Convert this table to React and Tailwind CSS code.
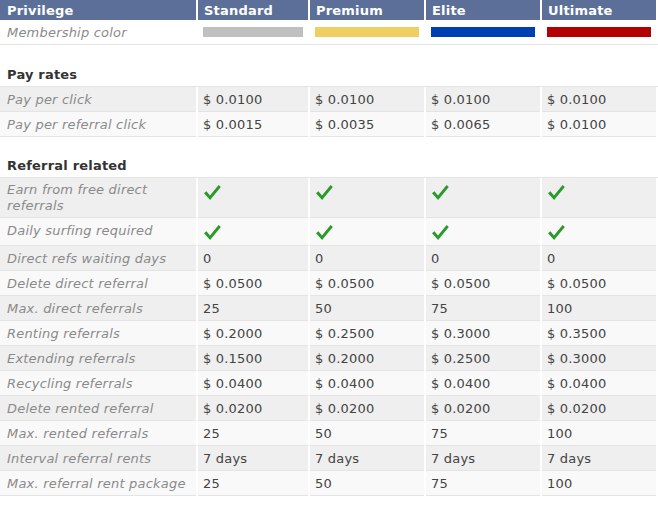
const cols = "grid grid-cols-[196px_110px_114px_114px_114px] gap-x-[2px]";

const levels = ["Standard", "Premium", "Elite", "Ultimate"];
const barColors = ["bg-[#c0c0c0]", "bg-[#efcf5f]", "bg-[#003eb3]", "bg-[#b30000]"];

const payRates = [
  ["Pay per click", ["$ 0.0100", "$ 0.0100", "$ 0.0100", "$ 0.0100"]],
  ["Pay per referral click", ["$ 0.0015", "$ 0.0035", "$ 0.0065", "$ 0.0100"]],
];

const referral = [
  ["Earn from free direct referrals", "check"],
  ["Daily surfing required", "check"],
  ["Direct refs waiting days", ["0", "0", "0", "0"]],
  ["Delete direct referral", ["$ 0.0500", "$ 0.0500", "$ 0.0500", "$ 0.0500"]],
  ["Max. direct referrals", ["25", "50", "75", "100"]],
  ["Renting referrals", ["$ 0.2000", "$ 0.2500", "$ 0.3000", "$ 0.3500"]],
  ["Extending referrals", ["$ 0.1500", "$ 0.2000", "$ 0.2500", "$ 0.3000"]],
  ["Recycling referrals", ["$ 0.0400", "$ 0.0400", "$ 0.0400", "$ 0.0400"]],
  ["Delete rented referral", ["$ 0.0200", "$ 0.0200", "$ 0.0200", "$ 0.0200"]],
  ["Max. rented referrals", ["25", "50", "75", "100"]],
  ["Interval referral rents", ["7 days", "7 days", "7 days", "7 days"]],
  ["Max. referral rent package", ["25", "50", "75", "100"]],
];

function Check() {
  return (
    <svg width="18" height="19" viewBox="0 0 18 19" className="block">
      <path d="M1 11.2 L3.4 9.2 L7 13.4 L15.6 3 L17.8 4.9 L7.1 17.9 Z" fill="#2b9a2b" />
    </svg>
  );
}

function Row({ label, values, shade, twoLine }) {
  const bg = shade ? "bg-[#efefef]" : "bg-[#f9f9f9]";
  return (
    <div className={cols}>
      <div
        className={`${bg} border-b border-[#e4e4e4] px-[7px] ${
          twoLine ? "pt-1 pb-1 leading-[15.5px]" : "pt-[5px] pb-[3px] leading-4"
        } italic text-[#8a8a8a]`}
      >
        {label}
      </div>
      {levels.map((lvl, i) => (
        <div
          key={lvl}
          className={`${bg} border-b border-[#e4e4e4] px-[5px] ${
            values === "check" ? "py-1" : "pt-[5px] pb-[3px]"
          } leading-4 text-[#444]`}
        >
          {values === "check" ? <Check /> : values[i]}
        </div>
      ))}
    </div>
  );
}

function Heading({ children, top }) {
  return (
    <div className={`border-b border-[#e4e4e4] px-[7px] ${top} pb-[3px] leading-4 font-bold text-[#333]`}>
      {children}
    </div>
  );
}

export default function App() {
  return (
    <div className="w-[658px] h-[508px] bg-white text-[13px] tracking-[0.2px] font-['DejaVu_Sans',Verdana,sans-serif]">
      {/* header */}
      <div className={cols}>
        <div className="bg-[#5b6f98] h-5 px-[7px] pt-[1px] leading-5 font-bold text-white">Privilege</div>
        {levels.map((lvl) => (
          <div key={lvl} className="bg-[#5b6f98] h-5 px-[6px] pt-[1px] leading-5 font-bold text-white">
            {lvl}
          </div>
        ))}
      </div>

      {/* membership colour */}
      <div className={`${cols} border-b border-[#e4e4e4]`}>
        <div className="px-[7px] pt-[5px] pb-[3px] leading-4 italic text-[#8a8a8a]">Membership color</div>
        {barColors.map((c) => (
          <div key={c} className="px-[5px] flex items-center h-6">
            <div className={`${c} h-[10px] w-full`}></div>
          </div>
        ))}
      </div>

      <Heading top="pt-[22px]">Pay rates</Heading>
      {payRates.map(([label, values], i) => (
        <Row key={label} label={label} values={values} shade={i % 2 === 0} />
      ))}

      <Heading top="pt-[21px]">Referral related</Heading>
      {referral.map(([label, values], i) => (
        <Row key={label} label={label} values={values} shade={i % 2 === 0} twoLine={i === 0} />
      ))}
    </div>
  );
}
